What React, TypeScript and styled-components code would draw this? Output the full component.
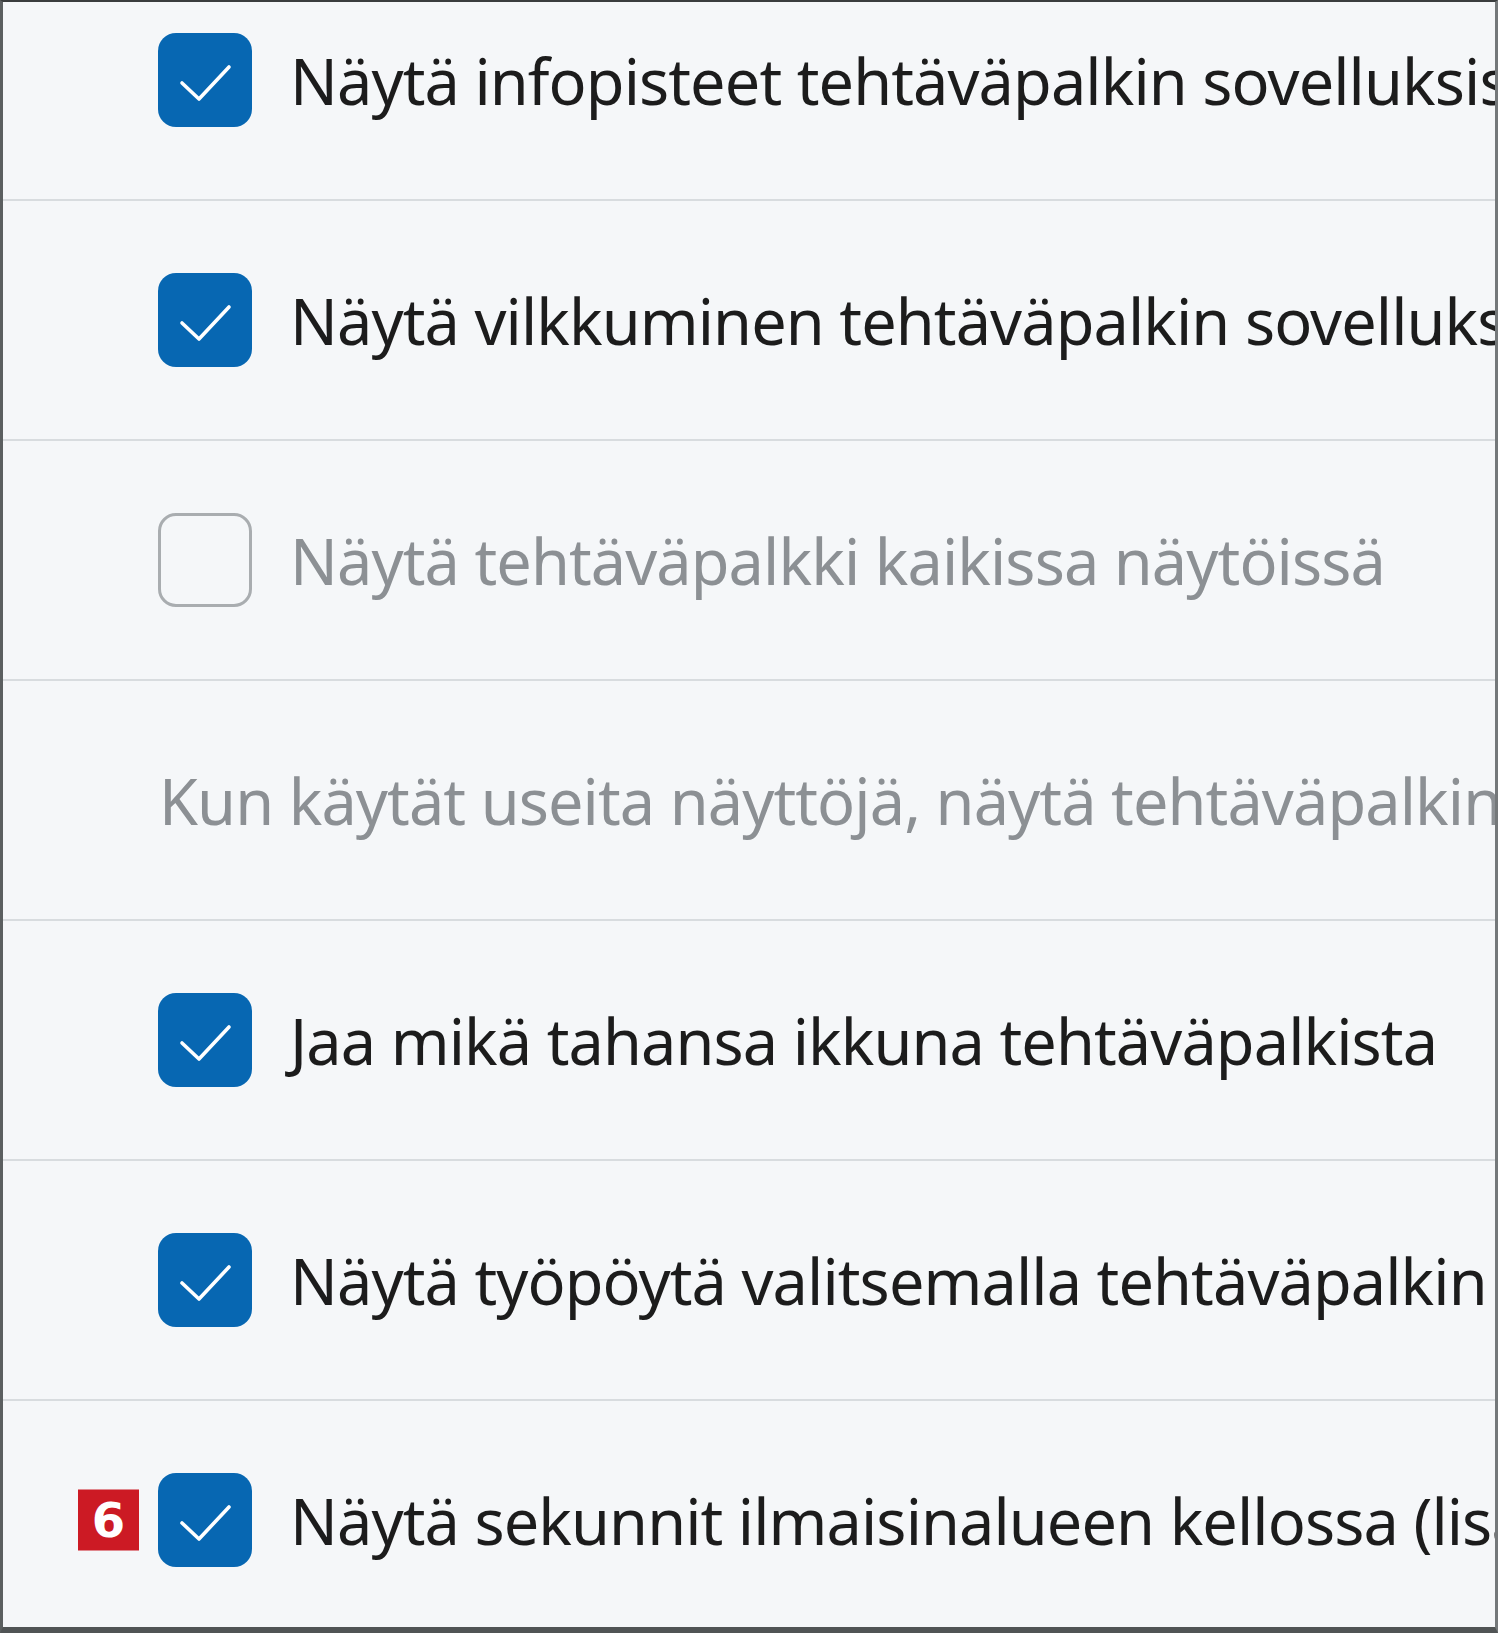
import React from 'react';
import styled, { createGlobalStyle } from 'styled-components';

const GlobalStyle = createGlobalStyle`
  html, body {
    margin: 0;
    padding: 0;
    background: #ffffff;
  }
`;

const Frame = styled.div`
  width: 1492px;
  height: 1625px;
  box-sizing: content-box;
  border-top: 2px solid #3a3d3e;
  border-left: 3px solid #5b5f60;
  border-right: 3px solid #74787a;
  border-bottom: 6px solid #505455;
  background: #f5f7f9;
  overflow: hidden;
  font-family: 'Noto Sans', 'Open Sans', sans-serif;
`;

const List = styled.div`
  display: flex;
  flex-direction: column;
  margin-top: -41px;
`;

const Row = styled.div`
  position: relative;
  height: 238px;
  display: flex;
  align-items: center;
  gap: 38px;
  padding-left: 155px;
  border-bottom: 2px solid #d8dcdf;
  white-space: nowrap;
`;

const Box = styled.div<{ $checked: boolean }>`
  flex: none;
  width: 94px;
  height: 94px;
  box-sizing: border-box;
  border-radius: 18px;
  background: ${(p) => (p.$checked ? '#0767b2' : 'transparent')};
  border: ${(p) => (p.$checked ? 'none' : '3px solid #a9adb0')};
  display: flex;
  align-items: center;
  justify-content: center;
`;

const Label = styled.span<{ $disabled?: boolean }>`
  font-size: 63px;
  color: ${(p) => (p.$disabled ? '#8c9094' : '#1c1c1c')};
  letter-spacing: -0.9px;
`;

const Note = styled.span`
  font-size: 63px;
  color: #8c9094;
  letter-spacing: -0.9px;
  margin-left: 1px;
`;

const Badge = styled.div`
  position: absolute;
  left: 75px;
  top: 50%;
  transform: translateY(-50%);
  width: 61px;
  height: 61px;
  background: #cc1a24;
  color: #ffffff;
  font-family: 'DejaVu Sans', sans-serif;
  font-weight: bold;
  font-size: 48px;
  line-height: 61px;
  text-align: center;
`;

const Check = () => (
  <svg width="94" height="94" viewBox="0 0 94 94">
    <path d="M24 50 L41 66 L71 34" fill="none" stroke="#ffffff" strokeWidth="3.6" strokeLinecap="round" strokeLinejoin="round" />
  </svg>
);

type Item =
  | { kind: 'check'; text: string; checked: boolean; disabled?: boolean; badge?: string }
  | { kind: 'note'; text: string };

const items: Item[] = [
  { kind: 'check', text: 'Näytä infopisteet tehtäväpalkin sovelluksissa', checked: true },
  { kind: 'check', text: 'Näytä vilkkuminen tehtäväpalkin sovelluksissa', checked: true },
  { kind: 'check', text: 'Näytä tehtäväpalkki kaikissa näytöissä', checked: false, disabled: true },
  { kind: 'note', text: 'Kun käytät useita näyttöjä, näytä tehtäväpalkin sovellukset' },
  { kind: 'check', text: 'Jaa mikä tahansa ikkuna tehtäväpalkista', checked: true },
  { kind: 'check', text: 'Näytä työpöytä valitsemalla tehtäväpalkin kaukainen kulma', checked: true },
  { kind: 'check', text: 'Näytä sekunnit ilmaisinalueen kellossa (lisää virrankulutusta)', checked: true, badge: '6' },
];

export default function App() {
  return (
    <>
      <GlobalStyle />
      <Frame>
        <List>
          {items.map((item, i) =>
            item.kind === 'note' ? (
              <Row key={i}>
                <Note>{item.text}</Note>
              </Row>
            ) : (
              <Row key={i}>
                {item.badge && <Badge>{item.badge}</Badge>}
                <Box $checked={item.checked}>{item.checked && <Check />}</Box>
                <Label $disabled={item.disabled}>{item.text}</Label>
              </Row>
            )
          )}
        </List>
      </Frame>
    </>
  );
}
